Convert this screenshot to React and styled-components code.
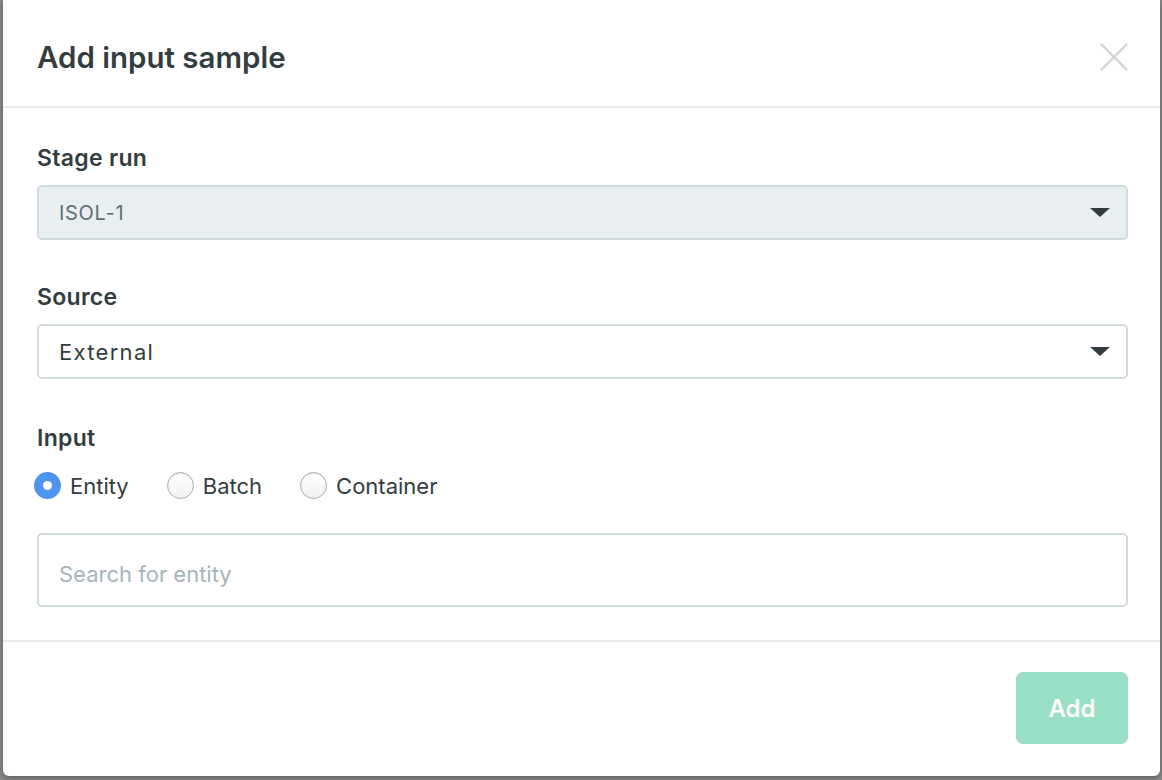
import React, { useState } from 'react'
import styled, { createGlobalStyle } from 'styled-components'

const Global = createGlobalStyle`
  html, body {
    margin: 0;
    padding: 0;
    height: 100%;
    background: #8a8a8a;
  }
  body {
    font-family: Inter, Lato, sans-serif;
    color: #333d40;
  }
  #root {
    height: 100%;
  }
`

// MODAL FRAME
const Backdrop = styled.div`
  height: 780px;
  padding: 0 2px 4px 3px;
  box-sizing: border-box;
  display: flex;
`

const Modal = styled.div`
  flex: 1;
  background: #fff;
  border-radius: 0 0 6px 6px;
  box-shadow: 0 2px 6px rgba(0, 0, 0, 0.35);
  display: flex;
  flex-direction: column;
`

const Header = styled.div`
  height: 108px;
  box-sizing: border-box;
  border-bottom: 2px solid #e8eced;
  display: flex;
  align-items: center;
  justify-content: space-between;
  padding: 8px 32px 0 34px;
`

const Title = styled.h2`
  margin: 0;
  font-size: 29.5px;
  font-weight: 600;
  color: #333d40;
`

const Close = styled.button`
  width: 28px;
  height: 28px;
  padding: 0;
  border: none;
  background: none;
  cursor: pointer;
  display: flex;
  align-items: center;
  justify-content: center;
`

const Body = styled.div`
  padding: 37px 32px 33px 34px;
  border-bottom: 2px solid #e8eced;
  display: flex;
  flex-direction: column;
`

const Field = styled.div`
  display: flex;
  flex-direction: column;
  margin-bottom: ${(p) => p.gap || 0}px;
`

const Label = styled.label`
  font-size: 23px;
  font-weight: 600;
  color: #333d40;
  margin-bottom: 14px;
  line-height: 26px;
  letter-spacing: 0.3px;
`

const SelectBox = styled.div`
  height: 55px;
  box-sizing: border-box;
  border: 2px solid #d0dbdd;
  border-radius: 5px;
  background: ${(p) => (p.disabled ? '#e9eef0' : '#fff')};
  display: flex;
  align-items: center;
  justify-content: space-between;
  padding: 0 16px 0 20px;
`

const SelectText = styled.span`
  font-size: ${(p) => (p.disabled ? 20 : 22)}px;
  color: ${(p) => (p.disabled ? '#5c7075' : '#333d40')};
  letter-spacing: ${(p) => (p.disabled ? 0.7 : 1.3)}px;
`

const Caret = styled.span`
  width: 0;
  height: 0;
  border-left: 10px solid transparent;
  border-right: 10px solid transparent;
  border-top: 9px solid #333d40;
`

// RADIO GROUP
const RadioRow = styled.div`
  display: flex;
  align-items: center;
  gap: 38px;
  height: 27px;
  margin: 7px 0 34px -3px;
`

const RadioOption = styled.label`
  display: flex;
  align-items: center;
  gap: 9px;
  font-size: 22px;
  color: #333d40;
  cursor: pointer;
`

const Dot = styled.span`
  width: 27px;
  height: 27px;
  box-sizing: border-box;
  border-radius: 50%;
  display: flex;
  align-items: center;
  justify-content: center;
  background: ${(p) => (p.checked ? '#4f94ee' : 'linear-gradient(#fff, #f1f1f1)')};
  border: ${(p) => (p.checked ? 'none' : '1px solid #a9a9a9')};
  box-shadow: ${(p) => (p.checked ? 'none' : 'inset 0 1px 1px rgba(0,0,0,0.08)')};

  &::after {
    content: '';
    width: 9px;
    height: 9px;
    border-radius: 50%;
    background: #fff;
    display: ${(p) => (p.checked ? 'block' : 'none')};
  }
`

const Search = styled.input`
  height: 74px;
  box-sizing: border-box;
  border: 2px solid #d0dbdd;
  border-radius: 5px;
  padding: 8px 20px 0;
  font-family: inherit;
  font-size: 22px;
  color: #333d40;
  outline: none;

  &::placeholder {
    color: #a5b5b9;
  }
`

const Footer = styled.div`
  flex: 1;
  display: flex;
  justify-content: flex-end;
  align-items: flex-start;
  padding: 30px 32px 0 0;
`

const AddButton = styled.button`
  width: 112px;
  height: 72px;
  padding-top: 2px;
  border: none;
  border-radius: 7px;
  background: #98dfc6;
  color: #fff;
  font-family: inherit;
  font-size: 24px;
  font-weight: 600;
  cursor: pointer;
`

const options = ['Entity', 'Batch', 'Container']

export default function App() {
  const [input, setInput] = useState('Entity')

  return (
    <>
      <Global />
      <Backdrop>
        <Modal>
          <Header>
            <Title>Add input sample</Title>
            <Close aria-label="Close">
              <svg width="28" height="28" viewBox="0 0 28 28">
                <path d="M1.5 1.5 L26.5 26.5 M26.5 1.5 L1.5 26.5" stroke="#d3d3d3" strokeWidth="2.4" strokeLinecap="round" />
              </svg>
            </Close>
          </Header>
          <Body>
            <Field gap={44}>
              <Label>Stage run</Label>
              <SelectBox disabled>
                <SelectText disabled>ISOL-1</SelectText>
                <Caret />
              </SelectBox>
            </Field>
            <Field gap={46}>
              <Label>Source</Label>
              <SelectBox>
                <SelectText>External</SelectText>
                <Caret />
              </SelectBox>
            </Field>
            <Field>
              <Label>Input</Label>
              <RadioRow>
                {options.map((o) => (
                  <RadioOption key={o} onClick={() => setInput(o)}>
                    <Dot checked={input === o} />
                    {o}
                  </RadioOption>
                ))}
              </RadioRow>
              <Search placeholder="Search for entity" />
            </Field>
          </Body>
          <Footer>
            <AddButton>Add</AddButton>
          </Footer>
        </Modal>
      </Backdrop>
    </>
  )
}
